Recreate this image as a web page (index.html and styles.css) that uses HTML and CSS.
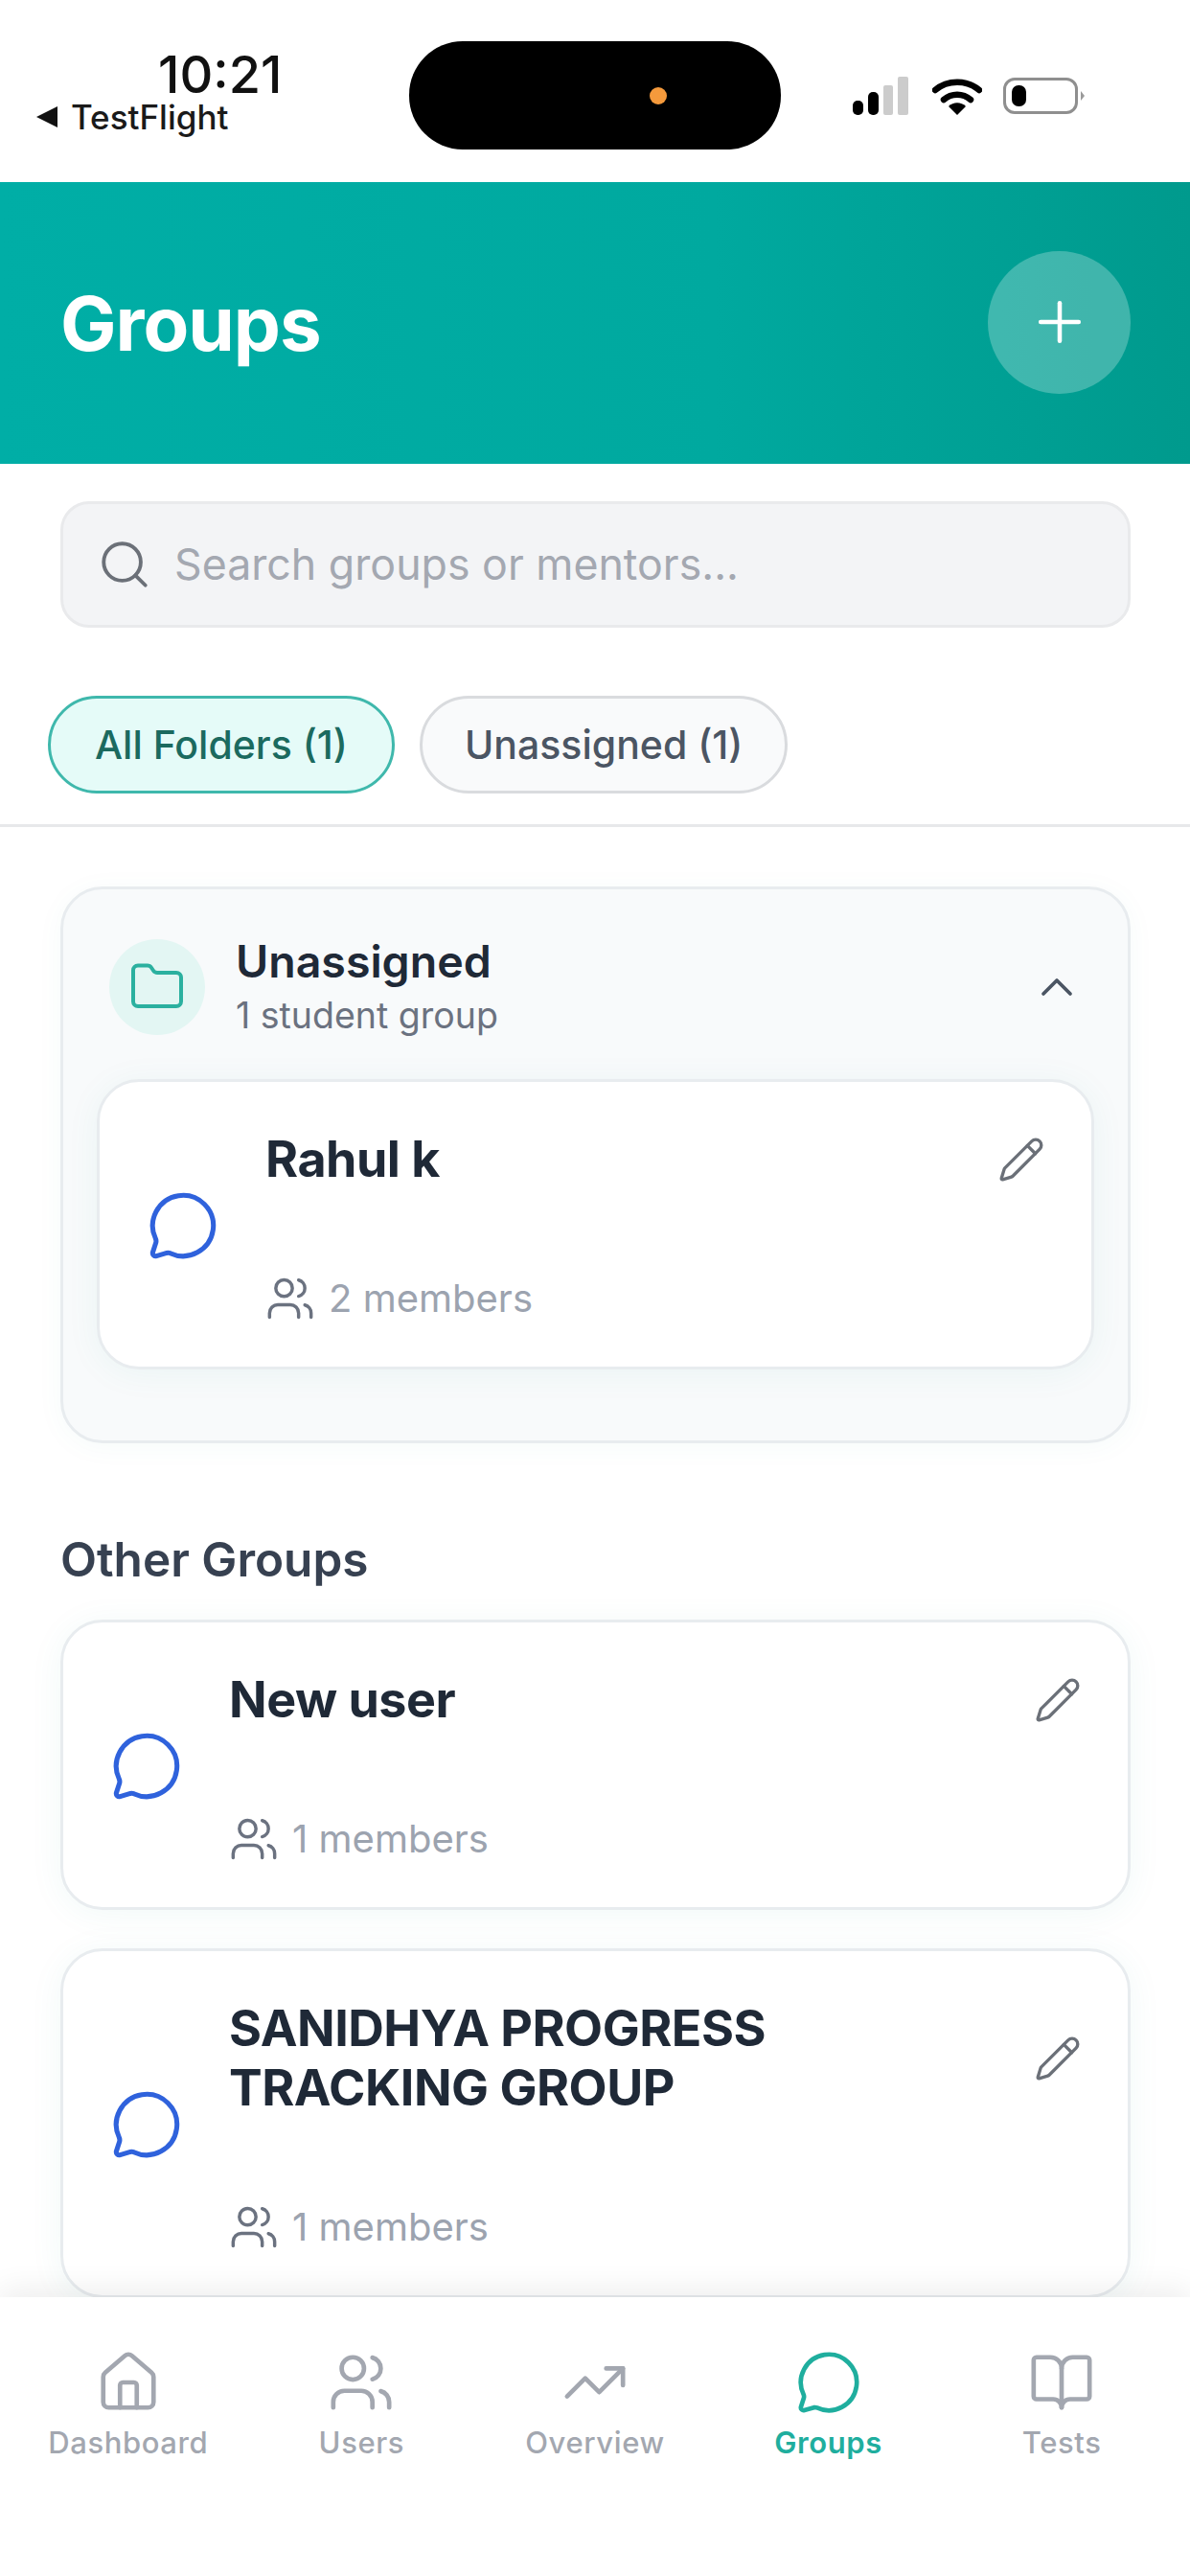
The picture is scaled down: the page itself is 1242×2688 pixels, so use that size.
FILE: index.html
```html
<!DOCTYPE html>
<html lang="en">
<head>
    <meta charset="UTF-8">
    <meta name="viewport" content="width=device-width, initial-scale=1.0">
    <title>Groups</title>
    <link rel="stylesheet" href="styles.css">
</head>
<body>
    <svg class="icon-defs" aria-hidden="true">
        <symbol id="i-chat" viewBox="0 0 24 24"><path d="M2.992 16.342a2 2 0 0 1 .094 1.167l-1.065 3.29a1 1 0 0 0 1.236 1.168l3.413-.998a2 2 0 0 1 1.099.092 10 10 0 1 0-4.777-4.719"/></symbol>
        <symbol id="i-users" viewBox="0 0 24 24"><path d="M16 21v-2a4 4 0 0 0-4-4H6a4 4 0 0 0-4 4v2"/><circle cx="9" cy="7" r="4"/><path d="M16 3.128a4 4 0 0 1 0 7.744"/><path d="M22 21v-2a4 4 0 0 0-3-3.87"/></symbol>
        <symbol id="i-pencil" viewBox="0 0 24 24"><path d="M21.174 6.812a1 1 0 0 0-3.986-3.987L3.842 16.174a2 2 0 0 0-.5.83l-1.321 4.352a.5.5 0 0 0 .623.622l4.353-1.32a2 2 0 0 0 .83-.497z"/><path d="m15 5 4 4"/></symbol>
    </svg>

    <div class="phone">
        <div class="status-bar">
            <div class="status-left">
                <div class="clock">10:21</div>
                <div class="back-app"><span class="back-arrow"></span>TestFlight</div>
            </div>
            <div class="island"><span class="island-dot"></span></div>
            <div class="status-right">
                <svg class="signal" viewBox="0 0 58 40"><rect x="0" y="25" width="11" height="15" rx="5" fill="#000"/><rect x="16" y="16" width="11" height="24" rx="5" fill="#000"/><rect x="32" y="9" width="10" height="31" rx="2" fill="#ccc"/><rect x="47" y="0" width="11" height="40" rx="2" fill="#ccc"/></svg>
                <svg class="wifi" viewBox="0 0 52 40"><path d="M3 14C16 3 36 3 49 14" fill="none" stroke="#000" stroke-width="6.5" stroke-linecap="round"/><path d="M12 24C20 17 32 17 40 24" fill="none" stroke="#000" stroke-width="6.5" stroke-linecap="round"/><path d="M17 31C22 26 30 26 35 31L26 40Z" fill="#000"/></svg>
                <div class="battery"><span class="battery-level"></span></div>
                <span class="battery-cap"></span>
            </div>
        </div>

        <header class="page-header">
            <h1>Groups</h1>
            <button class="add-btn">
                <svg class="icon" viewBox="0 0 24 24"><path d="M5 12h14"/><path d="M12 5v14"/></svg>
            </button>
        </header>

        <main class="content">
            <div class="search-wrap">
                <div class="search-box">
                    <svg class="icon search-icon" viewBox="0 0 24 24"><path d="m21 21-4.34-4.34"/><circle cx="11" cy="11" r="8"/></svg>
                    <span>Search groups or mentors...</span>
                </div>
            </div>

            <div class="chips">
                <div class="chip chip-active">All Folders (1)</div>
                <div class="chip">Unassigned (1)</div>
            </div>

            <div class="list">
                <section class="folder">
                    <div class="folder-head">
                        <div class="folder-badge">
                            <svg class="icon" viewBox="0 0 24 24"><path d="M20 20a2 2 0 0 0 2-2V8a2 2 0 0 0-2-2h-7.9a2 2 0 0 1-1.69-.9L9.6 3.9A2 2 0 0 0 7.93 3H4a2 2 0 0 0-2 2v13a2 2 0 0 0 2 2Z"/></svg>
                        </div>
                        <div class="folder-text">
                            <div class="folder-name">Unassigned</div>
                            <div class="folder-count">1 student group</div>
                        </div>
                        <svg class="icon chevron" viewBox="0 0 24 24"><path d="m18 15-6-6-6 6"/></svg>
                    </div>

                    <div class="group-card">
                        <svg class="icon chat-icon"><use href="#i-chat"/></svg>
                        <div class="group-body">
                            <div class="group-top">
                                <div class="group-name">Rahul k</div>
                                <svg class="icon edit-icon"><use href="#i-pencil"/></svg>
                            </div>
                            <div class="members">
                                <svg class="icon members-icon"><use href="#i-users"/></svg>
                                2 members
                            </div>
                        </div>
                    </div>
                </section>

                <h2 class="section-title">Other Groups</h2>

                <div class="group-card">
                    <svg class="icon chat-icon"><use href="#i-chat"/></svg>
                    <div class="group-body">
                        <div class="group-top">
                            <div class="group-name">New user</div>
                            <svg class="icon edit-icon"><use href="#i-pencil"/></svg>
                        </div>
                        <div class="members">
                            <svg class="icon members-icon"><use href="#i-users"/></svg>
                            1 members
                        </div>
                    </div>
                </div>

                <div class="group-card">
                    <svg class="icon chat-icon"><use href="#i-chat"/></svg>
                    <div class="group-body">
                        <div class="group-top">
                            <div class="group-name">SANIDHYA PROGRESS<br>TRACKING GROUP</div>
                            <svg class="icon edit-icon"><use href="#i-pencil"/></svg>
                        </div>
                        <div class="members">
                            <svg class="icon members-icon"><use href="#i-users"/></svg>
                            1 members
                        </div>
                    </div>
                </div>
            </div>
        </main>

        <nav class="tabbar">
            <div class="tab">
                <svg class="icon" viewBox="0 0 24 24"><path d="M15 21v-8a1 1 0 0 0-1-1h-4a1 1 0 0 0-1 1v8"/><path d="M3 10a2 2 0 0 1 .709-1.528l7-6a2 2 0 0 1 2.582 0l7 6A2 2 0 0 1 21 10v9a2 2 0 0 1-2 2H5a2 2 0 0 1-2-2z"/></svg>
                <span>Dashboard</span>
            </div>
            <div class="tab">
                <svg class="icon"><use href="#i-users"/></svg>
                <span>Users</span>
            </div>
            <div class="tab">
                <svg class="icon" viewBox="0 0 24 24"><path d="M16 7h6v6"/><path d="m22 7-8.5 8.5-5-5L2 17"/></svg>
                <span>Overview</span>
            </div>
            <div class="tab tab-active">
                <svg class="icon"><use href="#i-chat"/></svg>
                <span>Groups</span>
            </div>
            <div class="tab">
                <svg class="icon" viewBox="0 0 24 24"><path d="M12 7v14"/><path d="M3 18a1 1 0 0 1-1-1V4a1 1 0 0 1 1-1h5a4 4 0 0 1 4 4 4 4 0 0 1 4-4h5a1 1 0 0 1 1 1v13a1 1 0 0 1-1 1h-6a3 3 0 0 0-3 3 3 3 0 0 0-3-3z"/></svg>
                <span>Tests</span>
            </div>
        </nav>
    </div>
</body>
</html>
```

FILE: styles.css
```css
body {
    margin: 0;
    background: #fff;
    font-family: Inter, "Liberation Sans", sans-serif;
}
h1, h2 {
    margin: 0;
}
.icon-defs {
    display: none;
}
.icon {
    fill: none;
    stroke: currentColor;
    stroke-width: 1.6;
    stroke-linecap: round;
    stroke-linejoin: round;
    flex-shrink: 0;
}
.phone {
    width: 1242px;
    height: 2688px;
    display: flex;
    flex-direction: column;
    overflow: hidden;
}

/* status bar */
.status-bar {
    height: 190px;
    flex-shrink: 0;
    display: grid;
    grid-template-columns: 427px 388px 1fr;
    box-sizing: border-box;
    padding-top: 43px;
    background: #fff;
}
.status-left {
    padding: 6px 0 0 38px;
}
.clock {
    margin-left: 127px;
    font-size: 54px;
    line-height: 58px;
    font-weight: 500;
    color: #111;
}
.back-app {
    display: flex;
    align-items: center;
    gap: 14px;
    margin-top: -5px;
    font-size: 35px;
    line-height: 40px;
    font-weight: 500;
    color: #1a1a1a;
}
.back-arrow {
    width: 0;
    height: 0;
    border-top: 11px solid transparent;
    border-bottom: 11px solid transparent;
    border-right: 22px solid #111;
}
.island {
    height: 113px;
    background: #000;
    border-radius: 56px;
    position: relative;
}
.island-dot {
    position: absolute;
    left: 251px;
    top: 48px;
    width: 18px;
    height: 18px;
    border-radius: 50%;
    background: #f59a3c;
}
.status-right {
    display: flex;
    align-items: center;
    height: 113px;
    padding-left: 75px;
}
.signal {
    width: 58px;
    height: 40px;
    margin-right: 25px;
}
.wifi {
    width: 52px;
    height: 40px;
    margin-right: 22px;
}
.battery {
    box-sizing: border-box;
    width: 78px;
    height: 38px;
    padding: 5px 6px;
    border: 3px solid #8f8f8f;
    border-radius: 12px;
}
.battery-level {
    display: block;
    width: 15px;
    height: 100%;
    background: #000;
    border-radius: 7px;
}
.battery-cap {
    width: 0;
    height: 0;
    margin-left: 3px;
    border-top: 5px solid transparent;
    border-bottom: 5px solid transparent;
    border-left: 4px solid #9a9a9a;
}

/* teal header */
.page-header {
    height: 294px;
    flex-shrink: 0;
    box-sizing: border-box;
    padding: 0 62px 0 63px;
    display: flex;
    align-items: center;
    justify-content: space-between;
    background: linear-gradient(90deg, #00aea6, #00a99f 60%, #009a8d);
}
.page-header h1 {
    font-size: 78px;
    font-weight: 700;
    color: #fff;
    letter-spacing: -1px;
}
.add-btn {
    width: 149px;
    height: 149px;
    padding: 0;
    border: none;
    border-radius: 50%;
    background: rgba(255, 255, 255, 0.25);
    color: #fff;
    display: flex;
    align-items: center;
    justify-content: center;
    margin-top: -2px;
}
.add-btn .icon {
    width: 68px;
    height: 68px;
}

.content {
    flex: 1;
    min-height: 0;
    overflow: hidden;
}
.search-wrap {
    padding: 39px 62px 0 63px;
}
.search-box {
    height: 132px;
    box-sizing: border-box;
    display: flex;
    align-items: center;
    gap: 23px;
    padding-left: 35px;
    background: #f3f4f6;
    border: 3px solid #e9eaec;
    border-radius: 30px;
    font-size: 44.7px;
    color: #a4a8b1;
}
.search-icon {
    width: 58px;
    height: 58px;
    color: #6b7078;
}

/* filter chips */
.chips {
    display: flex;
    gap: 26px;
    padding: 71px 0 32px 50px;
    border-bottom: 3px solid #e7e8ea;
}
.chip {
    height: 102px;
    box-sizing: border-box;
    padding: 0 44px;
    display: flex;
    align-items: center;
    background: #f9fafb;
    border: 3px solid #d9dbde;
    border-radius: 51px;
    font-size: 41px;
    font-weight: 500;
    color: #4b5563;
}
.chip-active {
    padding: 0 46px;
    background: #e5fbf8;
    border-color: #3fb8ac;
    color: #1b6a5f;
}

.list {
    padding: 62px 62px 0 63px;
}

/* folder card */
.folder {
    padding: 0 35px 74px;
    background: #f8fafb;
    border: 3px solid #e8ecef;
    border-radius: 44px;
    box-shadow: 0 4px 30px rgba(0, 150, 140, 0.04);
}
.folder-head {
    height: 198px;
    box-sizing: border-box;
    display: flex;
    align-items: center;
    gap: 32px;
    padding: 6px 0 0 13px;
}
.folder-badge {
    width: 100px;
    height: 100px;
    border-radius: 50%;
    background: #e3f6f3;
    color: #2bb09f;
    display: flex;
    align-items: center;
    justify-content: center;
}
.folder-badge .icon {
    width: 60px;
    height: 60px;
}
.folder-text {
    flex: 1;
}
.folder-name {
    font-size: 46.5px;
    line-height: 56px;
    font-weight: 600;
    color: #1f2937;
}
.folder-count {
    margin-top: 4px;
    font-size: 37.5px;
    line-height: 50px;
    color: #6b7280;
}
.chevron {
    width: 56px;
    height: 56px;
    margin-right: 11px;
    color: #4b5563;
}
.section-title {
    margin: 91px 0 33px;
    font-size: 49.5px;
    line-height: 60px;
    font-weight: 600;
    color: #374151;
}

/* group cards */
.group-card {
    box-sizing: border-box;
    display: flex;
    align-items: center;
    gap: 48px;
    padding: 50px 48px 44px 49px;
    margin-bottom: 40px;
    background: #fff;
    border: 3px solid #e8ecef;
    border-radius: 44px;
    box-shadow: 0 4px 36px rgba(0, 150, 140, 0.06);
}
.folder .group-card {
    margin-bottom: 0;
}
.chat-icon {
    width: 76px;
    height: 76px;
    margin-top: -3px;
    color: #2f62dc;
}
.group-body {
    flex: 1;
}
.group-top {
    display: flex;
    align-items: center;
    justify-content: space-between;
}
.group-name {
    font-size: 52px;
    line-height: 62px;
    font-weight: 700;
    color: #1f2937;
    letter-spacing: -0.5px;
}
.edit-icon {
    width: 50px;
    height: 50px;
    color: #6b7078;
}
.members {
    display: flex;
    align-items: center;
    gap: 14px;
    margin-top: 86px;
    height: 55px;
    font-size: 40px;
    color: #9ca3af;
}
.members-icon {
    width: 52px;
    height: 52px;
    color: #6b7280;
}

/* bottom tabs */
.tabbar {
    height: 291px;
    flex-shrink: 0;
    box-sizing: border-box;
    padding: 54px 12px 0;
    display: grid;
    grid-template-columns: repeat(5, 1fr);
    align-items: start;
    background: #fff;
    box-shadow: 0 -8px 30px rgba(0, 0, 0, 0.07);
    position: relative;
}
.tab {
    display: flex;
    flex-direction: column;
    align-items: center;
    gap: 8px;
    font-size: 31px;
    line-height: 40px;
    font-weight: 500;
    letter-spacing: 0.6px;
    color: #a3a7b0;
}
.tab .icon {
    width: 70px;
    height: 70px;
}
.tab-active {
    color: #1fae9e;
    font-weight: 600;
}
```
